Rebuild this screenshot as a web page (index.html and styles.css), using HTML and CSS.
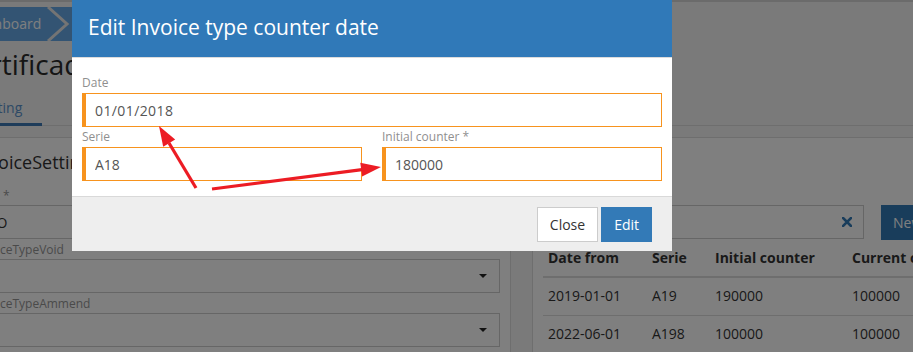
FILE: index.html
```html
<!DOCTYPE html>
<html>
<head>
    <meta charset="utf-8">
    <title>Invoice settings</title>
    <link rel="stylesheet" href="styles.css">
</head>
<body>
    <div class="page">
        <div class="breadcrumb">
            <span class="crumb">Dashboard</span>
            <svg class="crumb-sep" width="24" height="34" viewBox="0 0 24 34"><polyline points="2,0 21,17 2,34" fill="none" stroke="#e8e8e8" stroke-width="3"/></svg>
            <span class="crumb">Certificados</span>
        </div>
        <h1 class="page-title">Certificados</h1>
        <ul class="tabs">
            <li class="active">Setting</li>
        </ul>

        <div class="tab-content">
            <section class="panel">
                <h2>InvoiceSettings</h2>
                <div class="field">
                    <label>Print *</label>
                    <div class="control">NO</div>
                </div>
                <div class="field">
                    <label>InvoiceTypeVoid</label>
                    <div class="control select"><span></span><i class="caret"></i></div>
                </div>
                <div class="field">
                    <label>InvoiceTypeAmmend</label>
                    <div class="control select"><span></span><i class="caret"></i></div>
                </div>
            </section>

            <section class="panel">
                <h2>Counters</h2>
                <div class="toolbar">
                    <div class="search">
                        <svg width="10" height="10" viewBox="0 0 10 10"><path d="M1 1L9 9M9 1L1 9" stroke="#337ab7" stroke-width="2.6" stroke-linecap="square"/></svg>
                    </div>
                    <button class="btn-new">New</button>
                </div>
                <table class="counters">
                    <colgroup><col style="width:104px"><col style="width:63px"><col style="width:137px"><col></colgroup>
                    <thead>
                        <tr><th>Date from</th><th>Serie</th><th>Initial counter</th><th>Current counter</th></tr>
                    </thead>
                    <tbody>
                        <tr><td>2019-01-01</td><td>A19</td><td>190000</td><td>100000</td></tr>
                        <tr><td>2022-06-01</td><td>A198</td><td>100000</td><td>100000</td></tr>
                    </tbody>
                </table>
            </section>
        </div>
    </div>

    <div class="backdrop"></div>

    <div class="modal">
        <div class="modal-header">
            <h4 class="modal-title">Edit Invoice type counter date</h4>
        </div>
        <div class="modal-body">
            <div class="group">
                <label>Date</label>
                <input class="field-input date" type="text" value="01/01/2018">
            </div>
            <div class="row">
                <div class="group">
                    <label>Serie</label>
                    <input class="field-input" type="text" value="A18">
                </div>
                <div class="group">
                    <label>Initial counter *</label>
                    <input class="field-input" type="text" value="180000">
                </div>
            </div>
        </div>
        <div class="modal-footer">
            <button class="btn btn-default">Close</button>
            <button class="btn btn-primary">Edit</button>
        </div>
    </div>

    <!-- annotation arrows -->
    <svg class="annotations" width="913" height="352" viewBox="0 0 913 352">
        <line x1="196" y1="188" x2="169" y2="143" stroke="#ec1c24" stroke-width="3.2"/>
        <polygon points="159,126 175.2,139.6 163.2,146.8" fill="#ec1c24"/>
        <line x1="212" y1="189" x2="362" y2="169.6" stroke="#ec1c24" stroke-width="3.2"/>
        <polygon points="381,167 362.1,176.5 360.3,162.7" fill="#ec1c24"/>
    </svg>
</body>
</html>
```

FILE: styles.css
```css
body { margin: 0; font-family: "Open Sans", "Liberation Sans", sans-serif; font-size: 14px; color: #333; background: #f4f4f4; overflow: hidden; }

/* page behind the dialog */
.page { margin-left: -50px; width: 1300px; border-top: 2px solid #d6d6d6; }
.breadcrumb { display: inline-flex; align-items: center; height: 34px; margin-top: 5px; padding: 0 14px 0 19px; background: #66a9e6; color: #fff; vertical-align: top; }
.crumb { line-height: 34px; }
.crumb-sep { margin: 0 8px 0 5px; }
.page-title { margin: 3px 0 0; padding-left: 7px; font-size: 28px; font-weight: 400; line-height: 40px; color: #2a2a2a; }
.tabs { list-style: none; display: flex; margin: 4px 0 0; padding: 0 0 0 7px; border-bottom: 1px solid #ddd; }
.tabs li { padding: 10px 20px 5px; line-height: 20px; color: #5b93cc; border-bottom: 3px solid transparent; margin-bottom: -1px; }
.tabs li.active { border-bottom-color: #3d78b4; }

.tab-content { display: flex; gap: 21px; align-items: flex-start; padding: 11px 0 0 12px; }
.panel { width: 527px; padding: 12px 10px; background: #fff; border: 1px solid #ddd; height: 300px; }
.panel h2 { margin: 0 0 13px; font-size: 18px; font-weight: 400; line-height: 24px; }
.field { margin-bottom: 2px; }
.field label { display: block; font-size: 12px; line-height: 17px; color: #959595; margin-bottom: 1px; }
.control { display: flex; align-items: center; justify-content: space-between; box-sizing: border-box; height: 34px; padding: 0 12px; border: 1px solid #ccc; }
.caret { width: 0; height: 0; border-left: 4px solid transparent; border-right: 4px solid transparent; border-top: 4px solid #222; }

.toolbar { display: flex; gap: 17px; margin-top: 31px; }
.search { display: flex; align-items: center; justify-content: flex-end; box-sizing: border-box; width: 321px; height: 34px; padding-right: 11px; border: 1px solid #ccc; }
.btn-new { height: 35px; padding: 0 12px; border: none; background: #337ab7; color: #fff; font: 14px "Open Sans", sans-serif; }

.counters { border-collapse: collapse; width: 100%; }
.counters th { text-align: left; font-weight: 700; line-height: 20px; padding: 8px 5px; border-bottom: 2px solid #ddd; white-space: nowrap; }
.counters td { line-height: 20px; padding: 8px 5px 9px; border-bottom: 1px solid #ddd; }

/* dialog */
.backdrop { position: fixed; top: 0; left: 0; right: 0; bottom: 0; background: rgba(0, 0, 0, 0.5); }
.modal { position: fixed; top: 0; left: 72px; width: 600px; background: #fff; }
.modal-header { padding: 12px 16px 15px; background: #3079b8; color: #fff; border-bottom: 1px solid #dcdcdc; }
.modal-title { margin: 0; font-size: 21px; font-weight: 400; line-height: 30px; }
.modal-body { padding: 17px 10px 15px; }
.modal-body .row { display: flex; gap: 20px; }
.modal-body .row .group { flex: 1; }
.group { margin-bottom: 2px; }
.row .group { margin-bottom: 0; }
.group label { display: block; font-size: 12px; line-height: 16px; color: #8f8f8f; margin-bottom: 2px; }
.field-input { display: block; box-sizing: border-box; width: 100%; height: 34px; margin: 0; padding: 0 9px; border: 1px solid #f7931e; border-left-width: 4px; font: 14px "Open Sans", sans-serif; color: #555; outline: none; }
.field-input.date { letter-spacing: 0.4px; }
.modal-footer { display: flex; justify-content: flex-end; gap: 3px; padding: 10px 20px 9px; background: #eee; border-top: 1px solid #d9d9d9; }
.btn { height: 35px; padding: 0 12px; border: 1px solid transparent; font: 14px "Open Sans", sans-serif; }
.btn-default { background: #fff; border-color: #ccc; color: #333; }
.btn-primary { background: #337ab7; border-color: #337ab7; color: #fff; }

.annotations { position: fixed; top: 0; left: 0; pointer-events: none; }
```
